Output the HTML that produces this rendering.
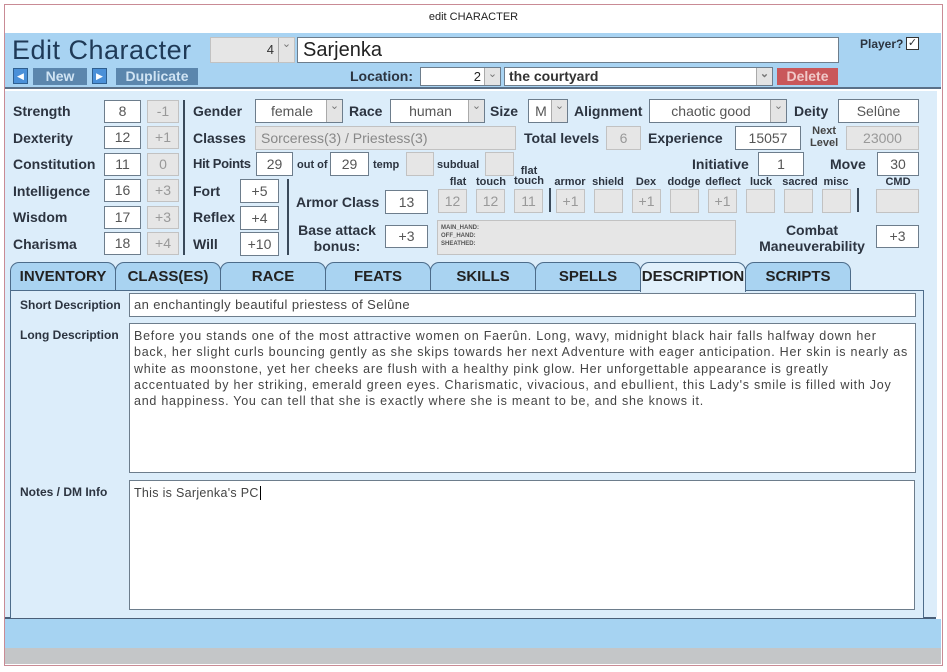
<!DOCTYPE html>
<html><head><meta charset="utf-8"><style>
*{box-sizing:border-box;margin:0;padding:0}
body{width:947px;height:672px;background:#fff;position:relative;overflow:hidden;font-family:"Liberation Sans",sans-serif;color:#2a2e33}
.a{position:absolute}
.l{position:absolute;font-weight:bold;font-size:14px;color:#2c3440;white-space:nowrap}
.s{position:absolute;font-weight:bold;font-size:11px;color:#2c3440;white-space:nowrap}
.b{position:absolute;background:#fff;border:1px solid #6d7d8c;font-size:14px;color:#555;text-align:center;white-space:nowrap;overflow:hidden}
.g{background:#e6e6e6;border-color:#c2c2c2;color:#999}
.cb:after{content:"⌄";position:absolute;right:0;top:0;bottom:0;width:15px;background:#e4e4e4;border-left:1px solid #aaa;font-size:11px;line-height:12px;color:#777;text-align:center}
.tab{position:absolute;top:262px;height:29px;background:#a9d3f1;border:1px solid #4d6c8a;border-bottom:none;border-radius:9px 9px 0 0;font-weight:bold;font-size:15px;text-align:center;line-height:28px;color:#222}
.btn{position:absolute;background:#5b86ad;color:#cfe3f3;font-weight:bold;font-size:14px;text-align:center;line-height:17px;height:17px}
.ar{position:absolute;background:#4a90d8;border:1px solid #2e5f90;width:15px;height:16px;color:#fff;font-size:9px;line-height:14px;text-align:center}
</style></head><body>
<div class="a" style="left:4px;top:4px;width:939px;height:662px;border:1px solid #c98b95"></div>
<div class="a" style="left:0;top:11px;width:947px;text-align:center;font-size:11px;color:#222">edit CHARACTER</div>
<div class="a" style="left:5px;top:33px;width:936px;height:56px;background:#a8d3f2;border-bottom:2px solid #5a7088"></div>
<div class="a" style="left:5px;top:91px;width:932px;height:526px;background:#dcedfa"></div>
<div class="a" style="left:5px;top:617px;width:931px;height:2px;background:#4a5f78"></div>
<div class="a" style="left:5px;top:619px;width:936px;height:29px;background:#a6d3f2"></div>
<div class="a" style="left:5px;top:648px;width:936px;height:16px;background:#c4c6c8"></div>

<div class="a" style="left:12px;top:35px;font-size:27px;color:#1f3a57;letter-spacing:0.5px">Edit Character</div>
<div class="b g cb" style="left:210px;top:37px;width:85px;height:26px;color:#333;text-align:right;padding-right:20px;line-height:24px;font-size:13px">4</div>
<div class="b" style="left:297px;top:37px;width:542px;height:26px;text-align:left;padding-left:5px;font-size:20px;color:#222;line-height:24px">Sarjenka</div>
<div class="s" style="left:860px;top:37px;font-size:12px">Player?</div>
<div class="a" style="left:906px;top:37px;width:13px;height:13px;border:1px solid #333;background:#fff;font-size:11px;line-height:11px;text-align:center">✓</div>
<div class="ar" style="left:13px;top:68px">◀</div>
<div class="btn" style="left:33px;top:68px;width:54px">New</div>
<div class="ar" style="left:92px;top:68px">▶</div>
<div class="btn" style="left:116px;top:68px;width:82px">Duplicate</div>
<div class="l" style="left:350px;top:68px">Location:</div>
<div class="b cb" style="left:420px;top:67px;width:81px;height:19px;text-align:right;padding-right:19px;font-size:13px;color:#222;line-height:17px">2</div>
<div class="b cb" style="left:504px;top:67px;width:269px;height:19px;text-align:left;padding-left:4px;font-size:14px;font-weight:bold;color:#333;line-height:17px">the courtyard</div>
<div class="btn" style="left:777px;top:68px;width:61px;background:#c9575a;color:#f0c8c8">Delete</div>

<div class="l" style="left:13px;top:103px">Strength</div><div class="b" style="left:104px;top:100px;width:37px;height:23px;line-height:21px">8</div><div class="b g" style="left:147px;top:100px;width:32px;height:23px;line-height:21px">-1</div>
<div class="l" style="left:13px;top:130px">Dexterity</div><div class="b" style="left:104px;top:126px;width:37px;height:23px;line-height:21px">12</div><div class="b g" style="left:147px;top:126px;width:32px;height:23px;line-height:21px">+1</div>
<div class="l" style="left:13px;top:156px">Constitution</div><div class="b" style="left:104px;top:153px;width:37px;height:23px;line-height:21px">11</div><div class="b g" style="left:147px;top:153px;width:32px;height:23px;line-height:21px">0</div>
<div class="l" style="left:13px;top:183px">Intelligence</div><div class="b" style="left:104px;top:179px;width:37px;height:23px;line-height:21px">16</div><div class="b g" style="left:147px;top:179px;width:32px;height:23px;line-height:21px">+3</div>
<div class="l" style="left:13px;top:209px">Wisdom</div><div class="b" style="left:104px;top:206px;width:37px;height:23px;line-height:21px">17</div><div class="b g" style="left:147px;top:206px;width:32px;height:23px;line-height:21px">+3</div>
<div class="l" style="left:13px;top:236px">Charisma</div><div class="b" style="left:104px;top:232px;width:37px;height:23px;line-height:21px">18</div><div class="b g" style="left:147px;top:232px;width:32px;height:23px;line-height:21px">+4</div>
<div class="a" style="left:183px;top:100px;width:2px;height:155px;background:#3a4a5a"></div>

<div class="l" style="left:193px;top:103px">Gender</div><div class="b cb" style="left:255px;top:99px;width:88px;height:24px;line-height:22px;padding-right:14px">female</div>
<div class="l" style="left:349px;top:103px">Race</div><div class="b cb" style="left:390px;top:99px;width:95px;height:24px;line-height:22px;padding-right:14px">human</div>
<div class="l" style="left:490px;top:103px">Size</div><div class="b cb" style="left:528px;top:99px;width:40px;height:24px;line-height:22px;padding-right:14px">M</div>
<div class="l" style="left:574px;top:103px">Alignment</div><div class="b cb" style="left:649px;top:99px;width:138px;height:24px;line-height:22px;padding-right:14px">chaotic good</div>
<div class="l" style="left:794px;top:103px">Deity</div><div class="b" style="left:838px;top:99px;width:81px;height:24px;line-height:22px">Selûne</div>

<div class="l" style="left:193px;top:130px">Classes</div><div class="b g" style="left:255px;top:126px;width:261px;height:24px;line-height:22px;text-align:left;padding-left:5px;color:#888">Sorceress(3) / Priestess(3)</div>
<div class="l" style="left:524px;top:130px">Total levels</div><div class="b g" style="left:606px;top:126px;width:35px;height:24px;line-height:22px">6</div>
<div class="l" style="left:648px;top:130px">Experience</div><div class="b" style="left:735px;top:126px;width:66px;height:24px;line-height:22px">15057</div>
<div class="s" style="left:810px;top:125px;text-align:center;line-height:12px;color:#444">Next<br>Level</div><div class="b g" style="left:846px;top:126px;width:73px;height:24px;line-height:22px">23000</div>

<div class="l" style="left:193px;top:156px;font-size:13px;letter-spacing:-0.3px">Hit Points</div><div class="b" style="left:256px;top:152px;width:37px;height:24px;line-height:22px">29</div>
<div class="s" style="left:297px;top:159px">out of</div><div class="b" style="left:330px;top:152px;width:39px;height:24px;line-height:22px">29</div>
<div class="s" style="left:373px;top:159px">temp</div><div class="b g" style="left:406px;top:152px;width:28px;height:24px"></div>
<div class="s" style="left:437px;top:159px">subdual</div><div class="b g" style="left:485px;top:152px;width:29px;height:24px"></div>
<div class="l" style="left:692px;top:156px">Initiative</div><div class="b" style="left:758px;top:152px;width:46px;height:24px;line-height:22px">1</div>
<div class="l" style="left:830px;top:156px">Move</div><div class="b" style="left:877px;top:152px;width:42px;height:24px;line-height:22px">30</div>

<div class="l" style="left:193px;top:183px">Fort</div><div class="b" style="left:240px;top:179px;width:39px;height:24px;line-height:22px">+5</div>
<div class="l" style="left:193px;top:209px">Reflex</div><div class="b" style="left:240px;top:206px;width:39px;height:24px;line-height:22px">+4</div>
<div class="l" style="left:193px;top:236px">Will</div><div class="b" style="left:240px;top:232px;width:39px;height:24px;line-height:22px">+10</div>
<div class="a" style="left:287px;top:179px;width:2px;height:76px;background:#3a4a5a"></div>

<div class="l" style="left:296px;top:194px">Armor Class</div><div class="b" style="left:385px;top:190px;width:43px;height:24px;line-height:22px">13</div>
<div class="l" style="left:296px;top:222px;width:82px;text-align:center;line-height:16px">Base attack<br>bonus:</div><div class="b" style="left:385px;top:225px;width:43px;height:23px;line-height:21px">+3</div>

<div class="s" style="left:443px;top:176px;width:30px;text-align:center">flat</div>
<div class="s" style="left:474px;top:176px;width:34px;text-align:center">touch</div>
<div class="s" style="left:512px;top:166px;width:34px;text-align:center;line-height:10px">flat<br>touch</div>
<div class="s" style="left:552px;top:176px;width:36px;text-align:center">armor</div>
<div class="s" style="left:590px;top:176px;width:36px;text-align:center">shield</div>
<div class="s" style="left:630px;top:176px;width:32px;text-align:center">Dex</div>
<div class="s" style="left:664px;top:176px;width:40px;text-align:center">dodge</div>
<div class="s" style="left:702px;top:176px;width:42px;text-align:center">deflect</div>
<div class="s" style="left:746px;top:176px;width:30px;text-align:center">luck</div>
<div class="s" style="left:780px;top:176px;width:40px;text-align:center">sacred</div>
<div class="s" style="left:820px;top:176px;width:32px;text-align:center">misc</div>
<div class="s" style="left:878px;top:176px;width:40px;text-align:center">CMD</div>
<div class="b g" style="left:438px;top:189px;width:29px;height:24px;line-height:22px">12</div>
<div class="b g" style="left:476px;top:189px;width:29px;height:24px;line-height:22px">12</div>
<div class="b g" style="left:514px;top:189px;width:29px;height:24px;line-height:22px">11</div>
<div class="a" style="left:549px;top:188px;width:2px;height:24px;background:#3a4a5a"></div>
<div class="b g" style="left:556px;top:189px;width:29px;height:24px;line-height:22px">+1</div>
<div class="b g" style="left:594px;top:189px;width:29px;height:24px"></div>
<div class="b g" style="left:632px;top:189px;width:29px;height:24px;line-height:22px">+1</div>
<div class="b g" style="left:670px;top:189px;width:29px;height:24px"></div>
<div class="b g" style="left:708px;top:189px;width:29px;height:24px;line-height:22px">+1</div>
<div class="b g" style="left:746px;top:189px;width:29px;height:24px"></div>
<div class="b g" style="left:784px;top:189px;width:29px;height:24px"></div>
<div class="b g" style="left:822px;top:189px;width:29px;height:24px"></div>
<div class="a" style="left:857px;top:188px;width:2px;height:24px;background:#3a4a5a"></div>
<div class="b g" style="left:876px;top:189px;width:43px;height:24px"></div>
<div class="b g" style="left:437px;top:220px;width:299px;height:35px;text-align:left;padding:3px 0 0 3px;font-size:6px;line-height:8px;font-weight:bold;color:#555">MAIN_HAND:<br>OFF_HAND:<br>SHEATHED:</div>
<div class="l" style="left:750px;top:222px;width:124px;text-align:center;line-height:16px">Combat<br>Maneuverability</div>
<div class="b" style="left:876px;top:225px;width:43px;height:23px;line-height:21px">+3</div>

<div class="tab" style="left:10px;width:106px">INVENTORY</div>
<div class="tab" style="left:115px;width:106px">CLASS(ES)</div>
<div class="tab" style="left:220px;width:106px">RACE</div>
<div class="tab" style="left:325px;width:106px">FEATS</div>
<div class="tab" style="left:430px;width:106px">SKILLS</div>
<div class="tab" style="left:535px;width:106px">SPELLS</div>
<div class="tab" style="left:745px;width:106px">SCRIPTS</div>
<div class="a" style="left:10px;top:290px;width:914px;height:328px;border:1px solid #4d6c8a;border-bottom:none;background:#dcedfa"></div>
<div class="tab" style="left:640px;width:106px;background:#e1f0fb;height:30px;z-index:2">DESCRIPTION</div>

<div class="s" style="left:20px;top:298px;font-size:12px">Short Description</div>
<div class="b" style="left:129px;top:293px;width:787px;height:24px;text-align:left;padding-left:4px;font-size:13px;line-height:22px;color:#444;letter-spacing:0.4px">an enchantingly beautiful priestess of Selûne</div>
<div class="s" style="left:20px;top:328px;font-size:12px">Long Description</div>
<div class="b" style="left:129px;top:323px;width:787px;height:150px;text-align:left;padding:4px 0 0 4px;font-size:12.5px;line-height:16.3px;color:#444;letter-spacing:0.75px">Before you stands one of the most attractive women on Faerûn. Long, wavy, midnight black hair falls halfway down her<br>back, her slight curls bouncing gently as she skips towards her next Adventure with eager anticipation. Her skin is nearly as<br>white as moonstone, yet her cheeks are flush with a healthy pink glow. Her unforgettable appearance is greatly<br>accentuated by her striking, emerald green eyes. Charismatic, vivacious, and ebullient, this Lady's smile is filled with Joy<br>and happiness. You can tell that she is exactly where she is meant to be, and she knows it.</div>
<div class="s" style="left:20px;top:485px;font-size:12px">Notes / DM Info</div>
<div class="b" style="left:129px;top:480px;width:786px;height:130px;text-align:left;padding:4px 0 0 4px;font-size:12.5px;line-height:16px;color:#444;letter-spacing:0.3px">This is Sarjenka's PC<span style="border-left:1px solid #000;margin-left:1px"></span></div>
</body></html>
